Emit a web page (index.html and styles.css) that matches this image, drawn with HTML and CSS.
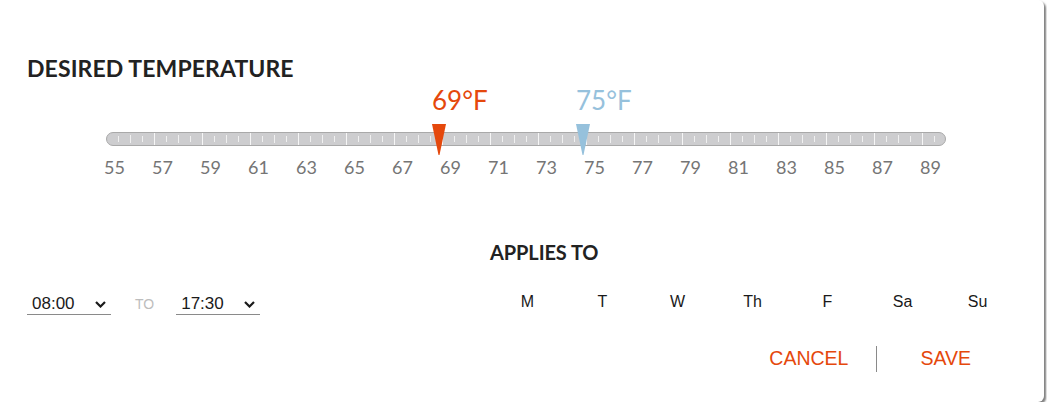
FILE: index.html
```html
<!DOCTYPE html>
<html lang="en">
<head>
    <meta charset="UTF-8">
    <meta name="viewport" content="width=device-width, initial-scale=1.0">
    <title>Schedule</title>
    <link rel="stylesheet" href="styles.css">
</head>
<body>
    <div class="dialog">
        <h1 class="title">DESIRED TEMPERATURE</h1>

        <div class="slider">
            <div class="track"></div>
            <div class="marker heat">
                <span class="marker-label">69°F</span>
                <svg class="pointer" width="14" height="31" viewBox="0 0 14 31"><polygon points="0,0 14,0 7.5,31 6.5,31" fill="#e5480c"/></svg>
            </div>
            <div class="marker cool">
                <span class="marker-label">75°F</span>
                <svg class="pointer" width="14" height="31" viewBox="0 0 14 31"><polygon points="0,0 14,0 7.5,31 6.5,31" fill="#96c1dc"/></svg>
            </div>
            <div class="scale">
                <span>55</span><span>57</span><span>59</span><span>61</span><span>63</span><span>65</span>
                <span>67</span><span>69</span><span>71</span><span>73</span><span>75</span><span>77</span>
                <span>79</span><span>81</span><span>83</span><span>85</span><span>87</span><span>89</span>
            </div>
        </div>

        <div class="schedule">
            <div class="times">
                <div class="time-select">
                    <span>08:00</span>
                    <svg width="11" height="7" viewBox="0 0 11 7"><polyline points="1,1 5.5,5.5 10,1" fill="none" stroke="#1a1a1a" stroke-width="2.2"/></svg>
                </div>
                <span class="to">TO</span>
                <div class="time-select">
                    <span>17:30</span>
                    <svg width="11" height="7" viewBox="0 0 11 7"><polyline points="1,1 5.5,5.5 10,1" fill="none" stroke="#1a1a1a" stroke-width="2.2"/></svg>
                </div>
            </div>
            <div class="applies">
                <h2 class="applies-title">APPLIES TO</h2>
                <div class="days">
                    <span>M</span><span>T</span><span>W</span><span>Th</span><span>F</span><span>Sa</span><span>Su</span>
                </div>
            </div>
        </div>

        <div class="actions">
            <button class="action cancel">CANCEL</button>
            <span class="divider"></span>
            <button class="action save">SAVE</button>
        </div>
    </div>
</body>
</html>
```

FILE: styles.css
```css
body {
    margin: 0;
    padding: 0;
    background-color: #ffffff;
    font-family: Lato, "Liberation Sans", sans-serif;
    color: #222222;
}
.dialog {
    width: 1044px;
    height: 402px;
    box-sizing: border-box;
    padding: 55px 0 0 27px;
    background-color: #ffffff;
    border-radius: 0 6px 6px 0;
    box-shadow: 2px 2px 2px rgba(0,0,0,0.5);
}
.title {
    margin: 0;
    font-size: 23px;
    line-height: 26px;
    font-weight: 700;
    letter-spacing: 0.1px;
    color: #222222;
}
.slider {
    position: relative;
    margin: 51px 0 0 79px;
    width: 840px;
}
.track {
    height: 14px;
    box-sizing: border-box;
    border: 1px solid #a9a9a9;
    border-radius: 7px;
    background:
        repeating-linear-gradient(90deg, transparent 0 47px, #f6f6f6 47px 48px),
        repeating-linear-gradient(90deg, transparent 0 23px, #f0f0f0 23px 24px) 0 50% / 100% 8px no-repeat,
        repeating-linear-gradient(90deg, transparent 0 11px, #f0f0f0 11px 12px) 0 50% / 100% 6px no-repeat,
        #cdcdcf;
}
.marker {
    position: absolute;
    top: -45px;
    display: flex;
    flex-direction: column;
    align-items: flex-start;
}
.marker.heat {
    left: 326px;
    color: #e5480c;
}
.marker.cool {
    left: 470px;
    color: #96c1dc;
}
.marker-label {
    font-size: 26px;
    line-height: 26px;
}
.pointer {
    display: block;
    margin-top: 11px;
}
.scale {
    display: flex;
    margin: 10px 0 0 -2px;
    font-size: 18px;
    line-height: 22px;
    color: #757575;
}
.scale span {
    flex: 0 0 48px;
}
.schedule {
    display: flex;
    align-items: flex-end;
    margin-top: 63px;
}
.times {
    flex: 0 0 463px;
    display: flex;
    align-items: flex-end;
    margin-bottom: -2px;
    font-family: "Liberation Sans", Arial, sans-serif;
}
.time-select {
    width: 84px;
    box-sizing: border-box;
    display: flex;
    align-items: center;
    justify-content: space-between;
    padding: 0 5px 0 5px;
    border-bottom: 1px solid #8a8a8a;
    font-size: 17px;
    line-height: 20px;
    color: #1a1a1a;
}
.to {
    margin: 0 22px 3px 24px;
    font-size: 14px;
    line-height: 16px;
    color: #bdbdbd;
}
.applies-title {
    margin: 0;
    font-size: 20px;
    line-height: 22px;
    font-weight: 700;
    letter-spacing: -0.1px;
    color: #222222;
}
.days {
    display: flex;
    margin-top: 28px;
    font-family: "Liberation Sans", Arial, sans-serif;
    font-size: 16px;
    line-height: 22px;
    color: #1a1a1a;
}
.days span {
    flex: 0 0 75px;
    text-align: center;
}
.actions {
    display: flex;
    align-items: center;
    justify-content: flex-end;
    margin-top: 30px;
    padding-right: 73px;
}
.action {
    padding: 0;
    border: none;
    background: none;
    font-family: "Liberation Sans", Arial, sans-serif;
    font-size: 19.5px;
    line-height: 24px;
    color: #e5480c;
    cursor: pointer;
}
.divider {
    width: 1px;
    height: 26px;
    margin: 3px 28px 0 28px;
    background-color: #8a8a8a;
}
.save {
    margin-left: 15px;
}
```
